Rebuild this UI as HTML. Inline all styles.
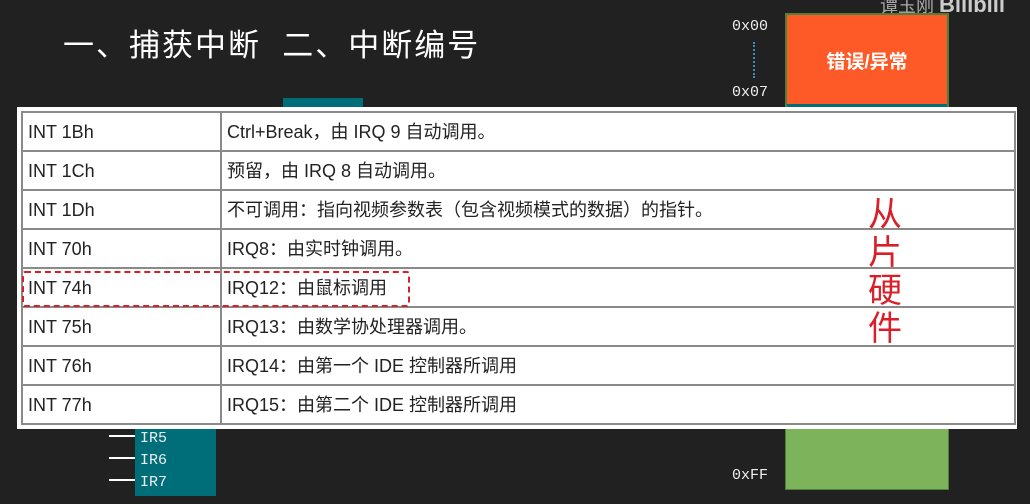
<!DOCTYPE html>
<html><head><meta charset="utf-8"><style>
body{margin:0;width:1030px;height:504px;background:#212121;position:relative;overflow:hidden;font-family:"Liberation Sans","Noto Sans CJK SC",sans-serif}
.abs{position:absolute}
.title{left:63px;top:20px;color:#fff;font-size:31px;white-space:pre;letter-spacing:2px}
.mono{font-family:"Liberation Mono",monospace;color:#eee;font-size:15px}
table{position:absolute;left:21px;top:111px;border-collapse:collapse;width:995px}
td{border:2px solid #8a8a8a;height:37px;padding:0 0 0 5px;font-size:18px;line-height:20px;color:#222;white-space:nowrap;vertical-align:middle;box-sizing:border-box}
tr{height:39px}
td:first-child{width:199px}
</style></head><body>
<div class="abs title">一、捕获中断  二、中断编号</div>
<div class="abs" style="left:880px;top:-8px;color:#aaa;font-size:18px">谭玉刚 <b style="font-size:22px;color:#ccc">Bılıbılı</b></div>
<div class="abs mono" style="left:732px;top:18px">0x00</div>
<div class="abs mono" style="left:732px;top:84px">0x07</div>
<div class="abs" style="left:753px;top:42px;width:2px;height:36px;border-left:2px dotted #3a8fc0"></div>
<div class="abs" style="left:785px;top:13px;width:160px;height:91px;background:#fe5a28;border:2px solid #4f7f3a;color:#fff;font-size:19px;display:flex;align-items:center;justify-content:center;font-weight:bold">错误/异常</div>
<div class="abs" style="left:787px;top:104px;width:160px;height:6px;background:#006e78"></div>
<div class="abs" style="left:283px;top:98px;width:80px;height:12px;background:#006e78"></div>
<div class="abs" style="left:785px;top:420px;width:162px;height:68px;background:#7db35a;border:1px solid #4d7f38"></div>
<div class="abs mono" style="left:732px;top:467px">0xFF</div>
<div class="abs" style="left:135px;top:420px;width:81px;height:76px;background:#006e78"></div>
<div class="abs mono" style="left:140px;top:428px;line-height:22px">IR5<br>IR6<br>IR7</div>
<div class="abs" style="left:109px;top:435px;width:26px;height:2px;background:#fff"></div>
<div class="abs" style="left:109px;top:457px;width:26px;height:2px;background:#fff"></div>
<div class="abs" style="left:109px;top:479px;width:26px;height:2px;background:#fff"></div>
<div class="abs" style="left:17px;top:107px;width:1000px;height:322px;background:#fff"></div>
<table>
<tr><td>INT 1Bh</td><td>Ctrl+Break，由 IRQ 9 自动调用。</td></tr>
<tr><td>INT 1Ch</td><td>预留，由 IRQ 8 自动调用。</td></tr>
<tr><td>INT 1Dh</td><td>不可调用：指向视频参数表（包含视频模式的数据）的指针。</td></tr>
<tr><td>INT 70h</td><td>IRQ8：由实时钟调用。</td></tr>
<tr><td>INT 74h</td><td>IRQ12：由鼠标调用</td></tr>
<tr><td>INT 75h</td><td>IRQ13：由数学协处理器调用。</td></tr>
<tr><td>INT 76h</td><td>IRQ14：由第一个 IDE 控制器所调用</td></tr>
<tr><td>INT 77h</td><td>IRQ15：由第二个 IDE 控制器所调用</td></tr>
</table>
<div class="abs" style="left:22px;top:271px;width:384px;height:32px;border:2px dashed #d9202a;border-radius:3px"></div>
<div class="abs" style="left:868px;top:196px;color:#d9202a;font-size:34px;line-height:38px;width:40px">从<br>片<br>硬<br>件</div>
</body></html>
